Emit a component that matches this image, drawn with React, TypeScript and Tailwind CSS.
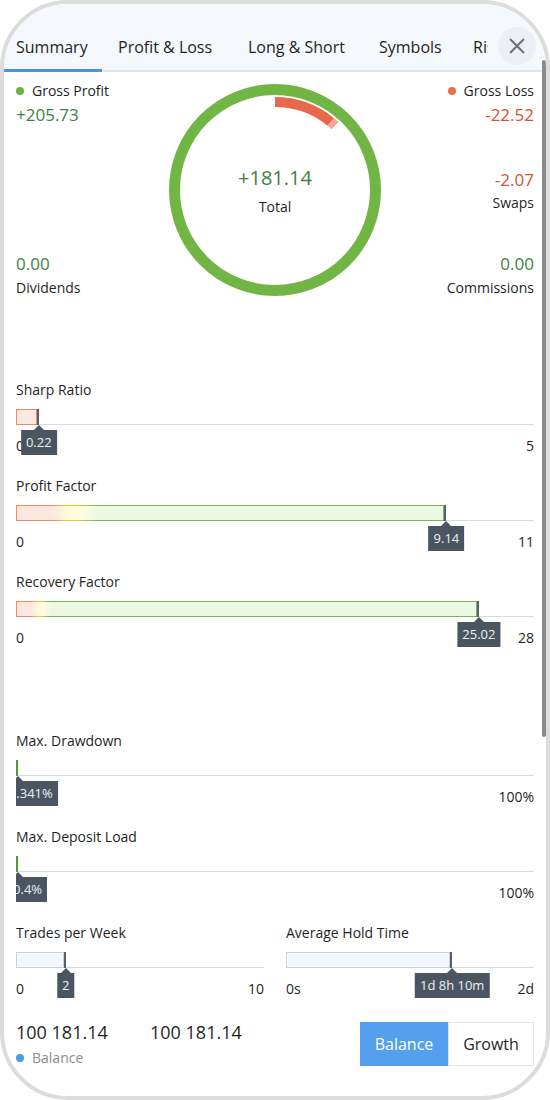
import React from "react";

type M = {
  label: string;
  min: string;
  max: string;
  pct: number;
  tip: string;
  outer: string;
  inner: string;
  thin?: boolean;
  tipPos: string;
};

const GREEN = "text-[#3e8142]";

function Metric({ m }: { m: M }) {
  return (
    <div className="overflow-hidden">
      <div className="text-[14px] leading-5 text-[#1f1f1f]">{m.label}</div>
      <div className="relative mt-[9px] flex h-4 items-end border-b border-[#d7dbe3]">
        <div
          className={`-mb-px h-4 ${m.outer}`}
          style={m.thin ? undefined : { width: `${m.pct}%` }}
        >
          {m.thin ? null : <div className={`h-full w-full ${m.inner}`} />}
        </div>
        <div
          className="absolute top-4 h-0 w-0 -translate-x-1/2 border-x-[5px] border-b-[5px] border-x-transparent border-b-[#4b5461]"
          style={{ left: `${m.pct}%` }}
        />
        <div
          className={`absolute top-[21px] h-[25px] whitespace-nowrap bg-[#4b5461] px-[5px] text-[13px] leading-[25px] text-[#eef0f3] ${m.tipPos}`}
          style={{ left: `${m.pct}%` }}
        >
          {m.tip}
        </div>
      </div>
      <div className="mt-[11px] flex justify-between text-[14px] leading-5 text-[#1f1f1f]">
        <span>{m.min}</span>
        <span>{m.max}</span>
      </div>
    </div>
  );
}

const sharp: M = {
  label: "Sharp Ratio",
  min: "0",
  max: "5",
  pct: 4.4,
  tip: "0.22",
  outer: "bg-[#ef8a5c] p-px border-r-2 border-[#57606b]",
  inner: "bg-[#fbe8e2]",
  tipPos: "-translate-x-1/2",
};
const profit: M = {
  label: "Profit Factor",
  min: "0",
  max: "11",
  pct: 83.09,
  tip: "9.14",
  outer:
    "p-px border-r-2 border-[#57606b] bg-[linear-gradient(90deg,#ef8a5c_0px,#ef8a5c_34px,#f0c43a_50px,#f0c43a_62px,#76b852_80px,#76b852_100%)]",
  inner:
    "bg-[linear-gradient(90deg,#fbe7e0_0px,#fbe7e0_34px,#fffbdc_52px,#fffbdc_64px,#ebf8e3_84px,#ebf8e3_100%)]",
  tipPos: "-translate-x-1/2",
};
const recovery: M = {
  label: "Recovery Factor",
  min: "0",
  max: "28",
  pct: 89.36,
  tip: "25.02",
  outer:
    "p-px border-r-2 border-[#57606b] bg-[linear-gradient(90deg,#ef8a5c_0px,#ef8a5c_15px,#f0c43a_21px,#f0c43a_26px,#76b852_33px,#76b852_100%)]",
  inner:
    "bg-[linear-gradient(90deg,#fbe7e0_0px,#fbe7e0_15px,#fffbdc_22px,#fffbdc_27px,#ebf8e3_34px,#ebf8e3_100%)]",
  tipPos: "-translate-x-1/2",
};
const drawdown: M = {
  label: "Max. Drawdown",
  min: "",
  max: "100%",
  pct: 0.341,
  tip: "0.341%",
  outer: "w-[2px] bg-[#4f9b2f]",
  inner: "",
  thin: true,
  tipPos: "translate-x-[calc(-100%+40px)]",
};
const deposit: M = {
  label: "Max. Deposit Load",
  min: "",
  max: "100%",
  pct: 0.4,
  tip: "0.4%",
  outer: "w-[2px] bg-[#4f9b2f]",
  inner: "",
  thin: true,
  tipPos: "translate-x-[calc(-100%+29px)]",
};
const trades: M = {
  label: "Trades per Week",
  min: "0",
  max: "10",
  pct: 20,
  tip: "2",
  outer: "bg-[#c9d0dc] p-px border-r-2 border-[#57606b]",
  inner: "bg-[#f4f7fc]",
  tipPos: "-translate-x-1/2",
};
const hold: M = {
  label: "Average Hold Time",
  min: "0s",
  max: "2d",
  pct: 67.01,
  tip: "1d 8h 10m",
  outer: "bg-[#c9d0dc] p-px border-r-2 border-[#57606b]",
  inner: "bg-[#f4f7fc]",
  tipPos: "-translate-x-1/2",
};

const tabs: { t: string; w: string }[] = [
  { t: "Summary", w: "w-[102px]" },
  { t: "Profit & Loss", w: "w-[130px]" },
  { t: "Long & Short", w: "w-[131px]" },
  { t: "Symbols", w: "w-[94px]" },
  { t: "Risks", w: "w-[80px]" },
];

export default function App() {
  return (
    <div className="h-[1100px] w-[550px] bg-white font-['Open_Sans',sans-serif] text-[#1f1f1f]">
      <div className="relative h-full w-full overflow-hidden rounded-[68px] border-4 border-[#dcdcdc] bg-white">
        {/* Tab bar */}
        <div className="flex h-[68px] bg-[#f5f8fc] shadow-[inset_0_-2px_0_#dde3ec]">
          <div className="flex w-[484px] overflow-hidden">
            <div className="-ml-1 flex">
              {tabs.map((x, i) => (
                <div
                  key={x.t}
                  className={`flex h-[68px] shrink-0 items-end whitespace-nowrap pb-[13px] pl-4 text-[16px] leading-6 text-[#1f1f1f] ${x.w} ${
                    i === 0 ? "shadow-[inset_0_-3px_0_#4a92e3]" : ""
                  }`}
                >
                  {x.t}
                </div>
              ))}
            </div>
          </div>
          <div className="flex flex-1 justify-center">
            <div className="mt-[23px] flex h-[38px] w-[38px] items-center justify-center rounded-full bg-[#eceff3]">
              <svg width="16" height="16" viewBox="0 0 16 16">
                <path d="M1 1 L15 15 M15 1 L1 15" stroke="#6f6f6f" strokeWidth="2" fill="none" />
              </svg>
            </div>
          </div>
        </div>

        {/* Summary top */}
        <div className="grid grid-cols-[1fr_212px_1fr] px-3 pt-[9px]">
          <div className="flex flex-col items-start">
            <div className="flex items-center gap-2 text-[14px] leading-5">
              <span className="h-2 w-2 rounded-full bg-[#6db33f]" />
              <span>Gross Profit</span>
            </div>
            <div className={`mt-[2px] text-[17px] leading-6 ${GREEN}`}>+205.73</div>
            <div className={`mt-[125px] text-[17px] leading-6 ${GREEN}`}>0.00</div>
            <div className="mt-[2px] text-[14px] leading-5">Dividends</div>
          </div>
          <div className="relative mt-[3px] h-[212px] w-[212px]">
            <svg width="212" height="212" viewBox="0 0 212 212" className="absolute inset-0">
              <circle cx="106" cy="106" r="100.5" fill="none" stroke="#71b545" strokeWidth="11" />
              <path d="M106 18 A88 88 0 0 1 161.9 38" fill="none" stroke="#e8694a" strokeWidth="10" />
              <path d="M161.9 38 A88 88 0 0 1 166 41.6" fill="none" stroke="#f4a68f" strokeWidth="10" />
            </svg>
            <div className="absolute inset-0 flex flex-col items-center justify-center">
              <div className={`text-[20px] leading-7 ${GREEN}`}>+181.14</div>
              <div className="mt-[5px] text-[14px] leading-5">Total</div>
            </div>
          </div>
          <div className="flex flex-col items-end text-right">
            <div className="flex items-center gap-2 text-[14px] leading-5">
              <span className="h-2 w-2 rounded-full bg-[#e8704a]" />
              <span>Gross Loss</span>
            </div>
            <div className="mt-[2px] text-[17px] leading-6 text-[#d5502e]">-22.52</div>
            <div className="mt-[41px] text-[17px] leading-6 text-[#d5502e]">-2.07</div>
            <div className="mt-[1px] text-[14px] leading-5">Swaps</div>
            <div className={`mt-[39px] text-[17px] leading-6 ${GREEN}`}>0.00</div>
            <div className="mt-[2px] text-[14px] leading-5">Commissions</div>
          </div>
        </div>

        {/* Metrics */}
        <div className="mt-[82px] flex flex-col px-3">
          <Metric m={sharp} />
          <div className="mt-[20px]">
            <Metric m={profit} />
          </div>
          <div className="mt-[20px]">
            <Metric m={recovery} />
          </div>
          <div className="mt-[83px]">
            <Metric m={drawdown} />
          </div>
          <div className="mt-[20px]">
            <Metric m={deposit} />
          </div>
          <div className="mt-[20px] grid grid-cols-2 gap-x-[22px]">
            <Metric m={trades} />
            <Metric m={hold} />
          </div>

          {/* Bottom */}
          <div className="mt-[21px] flex items-start justify-between">
            <div className="flex">
              <div className="w-[134px]">
                <div className="text-[18px] leading-6">100 181.14</div>
                <div className="mt-[4px] flex items-center gap-2 text-[14px] leading-5 text-[#8c8c8c]">
                  <span className="h-2 w-2 rounded-full bg-[#4a9de8]" />
                  <span>Balance</span>
                </div>
              </div>
              <div className="text-[18px] leading-6">100 181.14</div>
            </div>
            <div className="mt-[1.5px] flex">
              <div className="flex h-[44px] w-[88px] items-center justify-center bg-[#55a0ee] text-[16px] text-white">
                Balance
              </div>
              <div className="flex h-[44px] w-[86px] items-center justify-center border border-[#e4e4e4] bg-white text-[16px] text-[#1f1f1f]">
                Growth
              </div>
            </div>
          </div>
        </div>

        {/* Scrollbar */}
        <div className="absolute right-0 top-[56px] h-[677px] w-[4px] rounded-full bg-[#8a8a8a]" />
      </div>
    </div>
  );
}
